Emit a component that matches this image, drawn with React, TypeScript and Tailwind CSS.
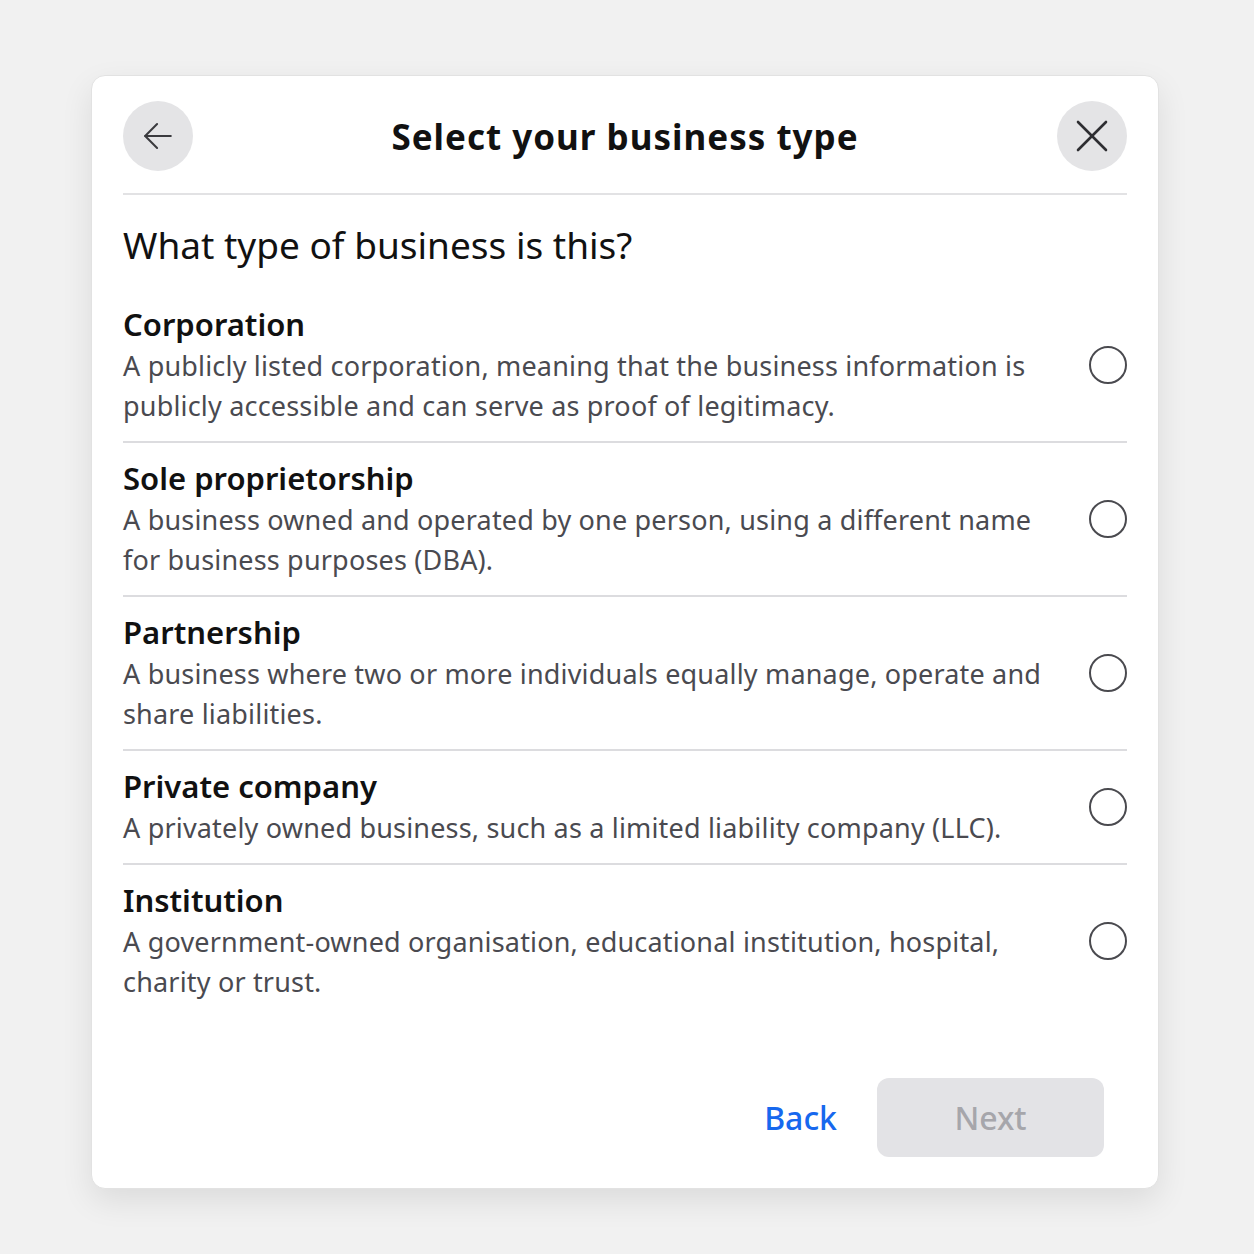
const options = [
  {
    title: "Corporation",
    lines: [
      "A publicly listed corporation, meaning that the business information is",
      "publicly accessible and can serve as proof of legitimacy.",
    ],
  },
  {
    title: "Sole proprietorship",
    lines: [
      "A business owned and operated by one person, using a different name",
      "for business purposes (DBA).",
    ],
  },
  {
    title: "Partnership",
    lines: [
      "A business where two or more individuals equally manage, operate and",
      "share liabilities.",
    ],
  },
  {
    title: "Private company",
    lines: ["A privately owned business, such as a limited liability company (LLC)."],
  },
  {
    title: "Institution",
    lines: [
      "A government-owned organisation, educational institution, hospital,",
      "charity or trust.",
    ],
  },
];

function Radio() {
  return (
    <span className="block w-[38px] h-[38px] rounded-full border-[2.5px] border-[#4a4a4f] shrink-0" />
  );
}

export default function App() {
  return (
    <div
      className="w-[1254px] h-[1254px] bg-[#f1f1f1] pt-[75px] pl-[91px]"
      style={{ fontFamily: '"Noto Sans", "Open Sans", sans-serif' }}
    >
      <div className="w-[1068px] h-[1114px] bg-white rounded-[14px] border border-[#e2e2e2] shadow-[0_12px_32px_rgba(0,0,0,0.09)] flex flex-col px-[31px]">
        {/* header */}
        <div className="flex items-center justify-between pt-[25px] pb-[22px] border-b-2 border-[#e2e2e4]">
          <button className="w-[70px] h-[70px] rounded-full bg-[#e4e4e6] flex items-center justify-center">
            <svg width="44" height="44" viewBox="0 0 24 24" fill="none" stroke="#3a3a3e" strokeWidth="1.1" strokeLinecap="round" strokeLinejoin="round">
              <path d="M19 12H5" />
              <path d="M11.5 5.5L5 12l6.5 6.5" />
            </svg>
          </button>
          <h1 className="pt-[3px] text-[35px] font-bold text-[#111] tracking-[1px]">Select your business type</h1>
          <button className="w-[70px] h-[70px] rounded-full bg-[#e4e4e6] flex items-center justify-center">
            <svg width="48" height="48" viewBox="0 0 24 24" fill="none" stroke="#2e2e32" strokeWidth="1.3" strokeLinecap="round">
              <path d="M5 5l14 14" />
              <path d="M19 5L5 19" />
            </svg>
          </button>
        </div>

        {/* question */}
        <p className="mt-[28px] text-[37px] leading-[44px] text-[#111] mb-[22px]">What type of business is this?</p>

        {/* options */}
        <div className="flex flex-col">
          {options.map((o, i) => (
            <div
              key={o.title}
              className={`flex items-center justify-between pt-[15px] pb-[15px] ${i < options.length - 1 ? "border-b-2 border-[#dcdcdf]" : ""}`}
            >
              <div>
                <div className="text-[31px] leading-[40px] font-semibold text-[#111]">{o.title}</div>
                <div className="mt-[2px] text-[27px] leading-[40px] tracking-[0.18px] text-[#4a4a50]">
                  {o.lines.map((l) => (
                    <div key={l} className="whitespace-nowrap">{l}</div>
                  ))}
                </div>
              </div>
              <Radio />
            </div>
          ))}
        </div>

        {/* footer */}
        <div className="mt-auto mb-[31px] flex items-center justify-end gap-[40px] pr-[23px]">
          <button className="text-[32px] font-medium text-[#1768ee]">Back</button>
          <button className="w-[227px] h-[79px] rounded-[12px] bg-[#e3e3e6] text-[32px] font-medium text-[#a6a6ab]">
            Next
          </button>
        </div>
      </div>
    </div>
  );
}
